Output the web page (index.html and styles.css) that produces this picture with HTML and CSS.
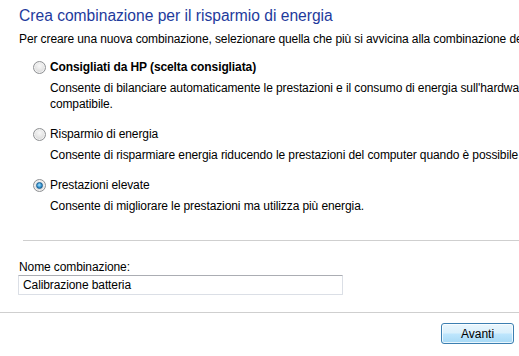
FILE: index.html
```html
<!DOCTYPE html>
<html>

<head>
    <meta charset="utf-8" />
    <title>Crea combinazione per il risparmio di energia</title>
    <link rel="stylesheet" href="styles.css">
</head>

<body>
    <div class="content">
        <h1 class="title">Crea combinazione per il risparmio di energia</h1>
        <p class="intro">Per creare una nuova combinazione, selezionare quella che più si avvicina alla combinazione desiderata.</p>

        <div class="options">
            <label class="option">
                <span class="option-head">
                    <span class="radio"></span>
                    <b>Consigliati da HP (scelta consigliata)</b>
                </span>
                <span class="desc">Consente di bilanciare automaticamente le prestazioni e il consumo di energia sull'hardware<br>compatibile.</span>
            </label>
            <label class="option">
                <span class="option-head">
                    <span class="radio"></span>
                    <span>Risparmio di energia</span>
                </span>
                <span class="desc">Consente di risparmiare energia riducendo le prestazioni del computer quando è possibile.</span>
            </label>
            <label class="option">
                <span class="option-head">
                    <span class="radio checked"></span>
                    <span>Prestazioni elevate</span>
                </span>
                <span class="desc">Consente di migliorare le prestazioni ma utilizza più energia.</span>
            </label>
        </div>

        <hr class="sep">

        <div class="name-field">
            <label for="name">Nome combinazione:</label>
            <div id="name" class="textbox">Calibrazione batteria</div>
        </div>
    </div>

    <div class="footer">
        <button class="btn">Avanti</button>
    </div>
</body>

</html>
```

FILE: styles.css
```css
html,
body {
    margin: 0;
    background: #fff;
    overflow: hidden;
}

body {
    width: 519px;
    height: 356px;
    font-family: "Liberation Sans", Arial, sans-serif;
    font-size: 12px;
    letter-spacing: -0.1px;
    color: #000;
}

.content {
    padding: 6px 0 0 19px;
    white-space: nowrap;
}

.title {
    margin: 0;
    font-size: 15.6px;
    font-weight: normal;
    letter-spacing: 0;
    line-height: 20px;
    color: #1e3a9c;
}

.intro {
    margin: 6px 0 0;
    line-height: 15px;
}

.options {
    display: flex;
    flex-direction: column;
    gap: 15px;
    margin-top: 13px;
    padding-left: 14px;
}

.option {
    display: flex;
    flex-direction: column;
}

.option-head {
    display: flex;
    align-items: center;
    gap: 4px;
    line-height: 15px;
}

.radio {
    position: relative;
    width: 11px;
    height: 11px;
    border: 1px solid #8f9194;
    border-radius: 50%;
    background: radial-gradient(circle at 50% 35%, #f8f8f8 0%, #e2e2e2 55%, #cdcdcd 100%);
    box-shadow: inset 0 0 0 1px #f2f2f2;
}

.radio.checked::after {
    content: "";
    position: absolute;
    left: 2px;
    top: 2px;
    width: 5px;
    height: 5px;
    border: 1px solid #1a5f92;
    border-radius: 50%;
    background: radial-gradient(circle at 45% 40%, #a6e4ff 0%, #3d9ad6 50%, #0f5b94 100%);
}

.desc {
    margin: 5px 0 0 17px;
    line-height: 16px;
}

.sep {
    margin: 26px 0 0 4px;
    border: 0;
    border-top: 1px solid #cfcfcf;
}

.name-field {
    display: flex;
    flex-direction: column;
    margin-top: 19px;
    line-height: 15px;
}

.textbox {
    box-sizing: border-box;
    width: 325px;
    height: 20px;
    margin-left: -1px;
    padding: 2px 4px;
    border: 1px solid #dbdfe6;
    border-top-color: #abadb3;
    border-radius: 1px;
}

.footer {
    display: flex;
    justify-content: flex-end;
    margin-top: 17px;
    padding: 10px 5px 0 0;
    border-top: 1px solid #cfcfcf;
}

.btn {
    width: 73px;
    height: 21px;
    padding: 0;
    font-family: inherit;
    font-size: 12px;
    letter-spacing: 0;
    color: #000;
    border: 1px solid #3c7fb1;
    border-radius: 3px;
    background: linear-gradient(#eaf6fd 0%, #d9f0fc 48%, #bee6fd 52%, #a7d9f5 100%);
    box-shadow: inset 0 0 0 1px rgba(255, 255, 255, 0.75);
}
```
